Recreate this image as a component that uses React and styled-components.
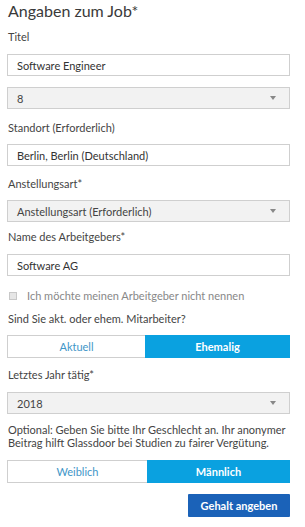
import React from 'react';
import styled, { createGlobalStyle } from 'styled-components';

const GlobalStyle = createGlobalStyle`
  html, body {
    margin: 0;
    padding: 0;
    background: #ffffff;
  }
  body {
    font-family: Lato, "Open Sans", "Liberation Sans", sans-serif;
    color: #444;
  }
`;

const Form = styled.div`
  width: 283px;
  padding: 1px 0 0 7px;
  display: flex;
  flex-direction: column;
`;

const Title = styled.h2`
  margin: 0 0 0 1px;
  font-size: 16px;
  line-height: 20px;
  font-weight: 400;
  color: #3a3a3a;
`;

const Label = styled.div`
  margin-top: ${(p) => p.$mt || 9}px;
  margin-left: 1px;
  font-size: 11px;
  line-height: 14px;
  color: #444;
`;

const Input = styled.div`
  box-sizing: border-box;
  height: 22px;
  margin-top: ${(p) => p.$mt || 9}px;
  border: 1px solid #cfcfcf;
  background: #fff;
  padding: 0 9px;
  display: flex;
  align-items: center;
  font-size: 11px;
  color: #333;
`;

const Select = styled(Input)`
  background: #f2f2f2;
  justify-content: space-between;
  color: #444;
`;

const Caret = styled.span`
  width: 0;
  height: 0;
  margin-right: 4px;
  border-left: 3px solid transparent;
  border-right: 3px solid transparent;
  border-top: 4px solid #888;
`;

const CheckRow = styled.div`
  margin-top: 13px;
  display: flex;
  align-items: center;
  gap: 10px;
  font-size: 11px;
  line-height: 14px;
  color: #888;
`;

const Box = styled.span`
  box-sizing: border-box;
  width: 8px;
  height: 8px;
  margin-left: 2px;
  border: 1px solid #c8c8c8;
  background: #e6e6e6;
`;

const Toggle = styled.div`
  box-sizing: border-box;
  margin-top: ${(p) => p.$mt || 9}px;
  height: 23px;
  display: grid;
  grid-template-columns: ${(p) => p.$split}px 1fr;
  border: 1px solid #cfcfcf;
`;

const Option = styled.div`
  display: flex;
  align-items: center;
  justify-content: center;
  font-size: 11px;
  font-weight: ${(p) => (p.$active ? 700 : 400)};
  color: ${(p) => (p.$active ? '#fff' : '#3f96c8')};
  background: ${(p) => (p.$active ? '#0aa1e0' : '#fff')};
  margin: ${(p) => (p.$active ? '-1px -1px -1px 0' : '0')};
`;

const Note = styled.p`
  margin: 9px 0 0 1px;
  font-size: 11px;
  line-height: 13px;
  color: #444;
`;

const Actions = styled.div`
  margin-top: 11px;
  display: flex;
  justify-content: flex-end;
`;

const Submit = styled.button`
  width: 102px;
  height: 23px;
  border: none;
  border-radius: 1px;
  background: #1b62b8;
  color: #fff;
  font-family: inherit;
  font-size: 11px;
  font-weight: 700;
  padding: 0;
  cursor: pointer;
`;

const SelectField = ({ value, mt }) => (
  <Select $mt={mt}>
    <span>{value}</span>
    <Caret />
  </Select>
);

const App = () => (
  <>
    <GlobalStyle />
    <Form>
      <Title>Angaben zum Job*</Title>
      <Label $mt={9}>Titel</Label>
      <Input $mt={10}>Software Engineer</Input>
      <SelectField value="8" mt={11} />
      <Label $mt={12}>Standort (Erforderlich)</Label>
      <Input $mt={9}>Berlin, Berlin (Deutschland)</Input>
      <Label $mt={11}>Anstellungsart*</Label>
      <SelectField value="Anstellungsart (Erforderlich)" mt={9} />
      <Label $mt={8}>Name des Arbeitgebers*</Label>
      <Input $mt={10}>Software AG</Input>
      <CheckRow>
        <Box />
        Ich möchte meinen Arbeitgeber nicht nennen
      </CheckRow>
      <Label $mt={9}>Sind Sie akt. oder ehem. Mitarbeiter?</Label>
      <Toggle $mt={9} $split={137}>
        <Option>Aktuell</Option>
        <Option $active>Ehemalig</Option>
      </Toggle>
      <Label $mt={10}>Letztes Jahr tätig*</Label>
      <SelectField value="2018" mt={10} />
      <Note>
        Optional: Geben Sie bitte Ihr Geschlecht an. Ihr anonymer Beitrag hilft
        Glassdoor bei Studien zu fairer Vergütung.
      </Note>
      <Toggle $mt={11} $split={139}>
        <Option>Weiblich</Option>
        <Option $active>Männlich</Option>
      </Toggle>
      <Actions>
        <Submit>Gehalt angeben</Submit>
      </Actions>
    </Form>
  </>
);

export default App;
